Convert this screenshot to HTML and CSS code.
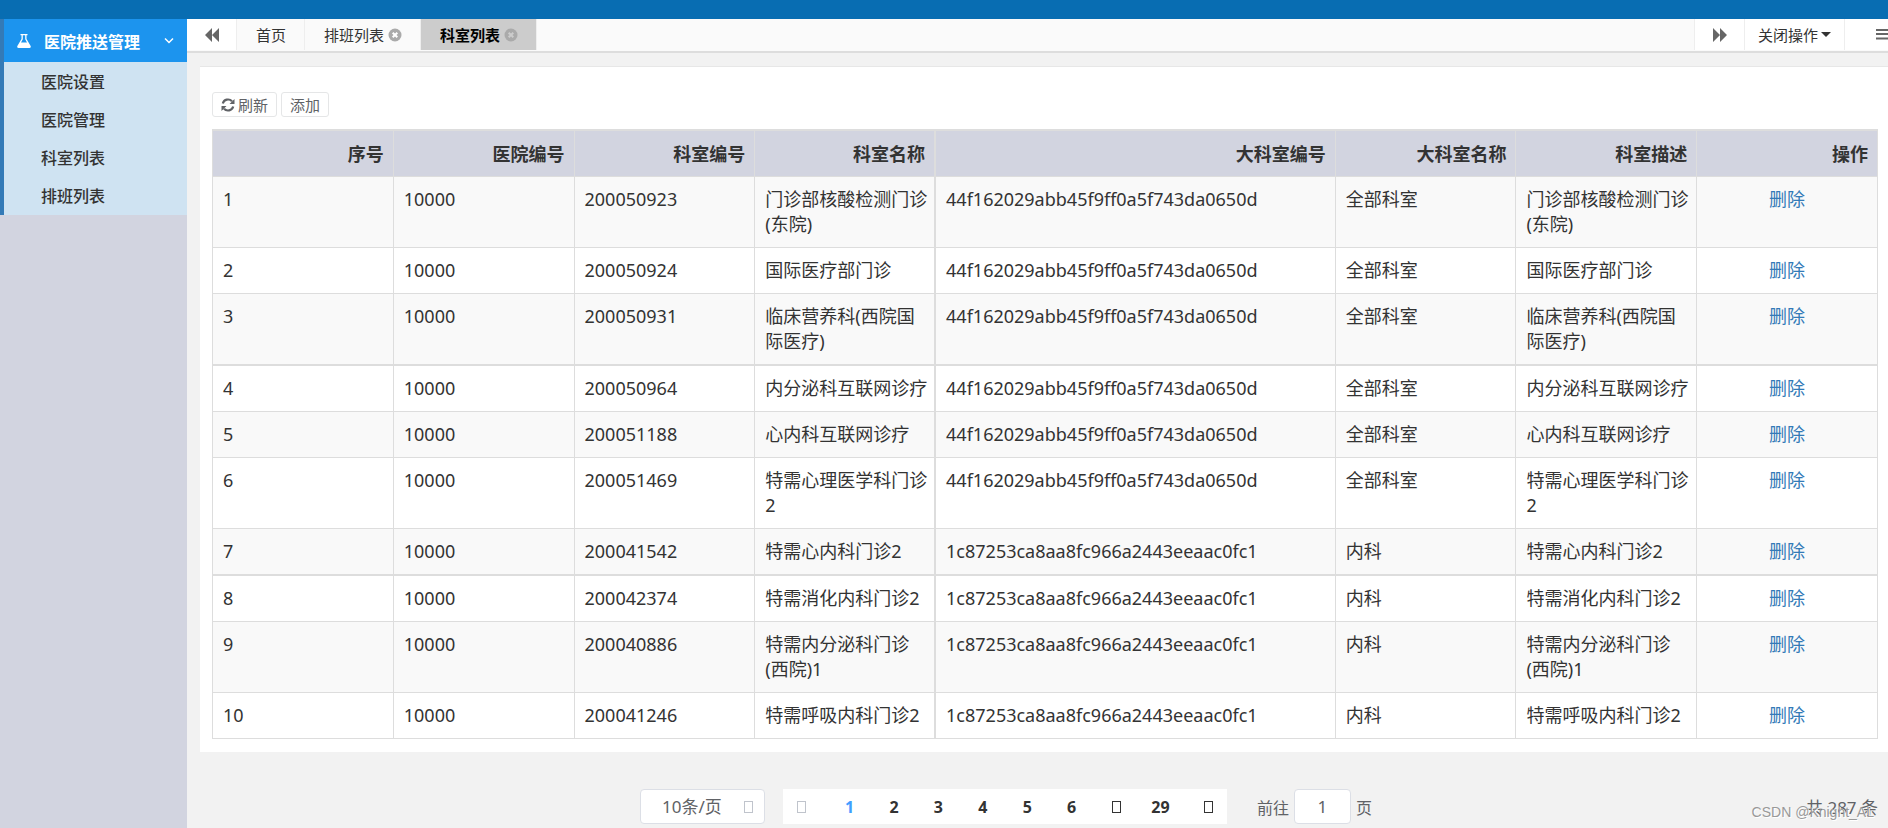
FILE: index.html
```html
<!DOCTYPE html>
<html lang="zh-CN">
<head>
<meta charset="utf-8">
<title>科室列表</title>
<link rel="stylesheet" href="styles.css">
</head>
<body>
<header class="topbar"></header>
<div class="shell">
  <nav class="sidebar">
    <div class="menu">
      <button class="menu-head" type="button">
        <svg class="flask" width="16" height="16" viewBox="0 0 16 16" aria-hidden="true"><path fill="currentColor" fill-rule="evenodd" d="M4.500 1h7v1.300H10.500V6l4 6.800c.7 1.200.3 2.200-1.100 2.200H2.600c-1.400 0-1.800-1-1.100-2.200L5.500 6V2.300h-1zM6.800 2.300v4L5 9.500h6L9.200 6.300v-4z"/></svg>
        <span>医院推送管理</span>
        <svg class="chev" width="12" height="8" viewBox="0 0 12 8" aria-hidden="true"><path d="M2 1.500l4 4 4-4" fill="none" stroke="currentColor" stroke-width="1.500"/></svg>
      </button>
      <a class="menu-item" href="#">医院设置</a>
      <a class="menu-item" href="#">医院管理</a>
      <a class="menu-item" href="#">科室列表</a>
      <a class="menu-item" href="#">排班列表</a>
    </div>
  </nav>
  <main class="main">
    <div class="tabs">
      <button class="tab-ctl" type="button" aria-label="向左"><svg width="16" height="14" viewBox="0 0 16 14"><path fill="currentColor" d="M8 0v14L1 7zM15 0v14L8 7z"/></svg></button>
      <a class="tab" href="#">首页</a>
      <a class="tab" href="#">排班列表<svg class="close" width="14" height="14" viewBox="0 0 14 14"><circle cx="7" cy="7" r="6.500" fill="currentColor"/><path d="M4.700 4.700l4.600 4.600M9.300 4.700L4.700 9.300" stroke="#fff" stroke-width="2"/></svg></a>
      <a class="tab tab-active" href="#">科室列表<svg class="close" width="14" height="14" viewBox="0 0 14 14"><circle cx="7" cy="7" r="6.500" fill="currentColor"/><path d="M4.700 4.700l4.600 4.600M9.300 4.700L4.700 9.300" stroke="#ccc" stroke-width="2"/></svg></a>
      <button class="tab-ctl tab-next" type="button" aria-label="向右"><svg width="16" height="14" viewBox="0 0 16 14"><path fill="currentColor" d="M1 0v14l7-7zM8 0v14l7-7z"/></svg></button>
      <button class="tab-ops" type="button">关闭操作<span class="caret"></span></button>
      <button class="tab-more" type="button" aria-label="菜单"><svg width="16" height="14" viewBox="0 0 16 14"><path fill="currentColor" d="M0 1h16v2H0zM0 5h16v2H0zM0 9.500h16v2H0z"/></svg></button>
    </div>
    <section class="panel">
      <div class="toolbar">
        <button class="btn" type="button"><svg width="14" height="14" viewBox="0 0 14 14"><path d="M1.800 5.500A5.400 5.400 0 0 1 11 3.300M12.200 8.500A5.400 5.400 0 0 1 3 10.700" fill="none" stroke="currentColor" stroke-width="2.200"/><path fill="currentColor" d="M13.500 1v5h-5zM.5 13V8h5z"/></svg>刷新</button>
        <button class="btn" type="button">添加</button>
      </div>
      <table class="grid">
        <colgroup><col><col><col><col><col class="wide"><col><col><col></colgroup>
        <thead><tr><th>序号</th><th>医院编号</th><th>科室编号</th><th>科室名称</th><th>大科室编号</th><th>大科室名称</th><th>科室描述</th><th>操作</th></tr></thead>
        <tbody>
          <tr><td>1</td><td>10000</td><td>200050923</td><td>门诊部核酸检测门诊(东院)</td><td>44f162029abb45f9ff0a5f743da0650d</td><td>全部科室</td><td>门诊部核酸检测门诊(东院)</td><td><a href="#">删除</a></td></tr>
          <tr><td>2</td><td>10000</td><td>200050924</td><td>国际医疗部门诊</td><td>44f162029abb45f9ff0a5f743da0650d</td><td>全部科室</td><td>国际医疗部门诊</td><td><a href="#">删除</a></td></tr>
          <tr><td>3</td><td>10000</td><td>200050931</td><td>临床营养科(西院国际医疗)</td><td>44f162029abb45f9ff0a5f743da0650d</td><td>全部科室</td><td>临床营养科(西院国际医疗)</td><td><a href="#">删除</a></td></tr>
          <tr><td>4</td><td>10000</td><td>200050964</td><td>内分泌科互联网诊疗</td><td>44f162029abb45f9ff0a5f743da0650d</td><td>全部科室</td><td>内分泌科互联网诊疗</td><td><a href="#">删除</a></td></tr>
          <tr><td>5</td><td>10000</td><td>200051188</td><td>心内科互联网诊疗</td><td>44f162029abb45f9ff0a5f743da0650d</td><td>全部科室</td><td>心内科互联网诊疗</td><td><a href="#">删除</a></td></tr>
          <tr><td>6</td><td>10000</td><td>200051469</td><td>特需心理医学科门诊2</td><td>44f162029abb45f9ff0a5f743da0650d</td><td>全部科室</td><td>特需心理医学科门诊2</td><td><a href="#">删除</a></td></tr>
          <tr><td>7</td><td>10000</td><td>200041542</td><td>特需心内科门诊2</td><td>1c87253ca8aa8fc966a2443eeaac0fc1</td><td>内科</td><td>特需心内科门诊2</td><td><a href="#">删除</a></td></tr>
          <tr><td>8</td><td>10000</td><td>200042374</td><td>特需消化内科门诊2</td><td>1c87253ca8aa8fc966a2443eeaac0fc1</td><td>内科</td><td>特需消化内科门诊2</td><td><a href="#">删除</a></td></tr>
          <tr><td>9</td><td>10000</td><td>200040886</td><td>特需内分泌科门诊(西院)1</td><td>1c87253ca8aa8fc966a2443eeaac0fc1</td><td>内科</td><td>特需内分泌科门诊(西院)1</td><td><a href="#">删除</a></td></tr>
          <tr><td>10</td><td>10000</td><td>200041246</td><td>特需呼吸内科门诊2</td><td>1c87253ca8aa8fc966a2443eeaac0fc1</td><td>内科</td><td>特需呼吸内科门诊2</td><td><a href="#">删除</a></td></tr>
        </tbody>
      </table>
    </section>
    <footer class="pagination">
      <div class="pager-group">
        <div class="size">
          <select aria-label="每页条数"><option>10条/页</option></select>
          <i class="box box-dim size-mark"></i>
        </div>
        <div class="pager">
          <button class="prev" type="button" aria-label="上一页"><i class="box box-dim"></i></button>
          <button class="current" type="button">1</button>
          <button type="button">2</button>
          <button type="button">3</button>
          <button type="button">4</button>
          <button type="button">5</button>
          <button type="button">6</button>
          <button type="button" aria-label="更多"><i class="box"></i></button>
          <button type="button">29</button>
          <button class="next" type="button" aria-label="下一页"><i class="box"></i></button>
        </div>
        <label class="jump">前往<input type="text" value="1">页</label>
      </div>
      <span class="total">共 287 条</span>
      <span class="watermark">CSDN @Knight_AL</span>
    </footer>
  </main>
</div>
</body>
</html>
```
FILE: styles.css
```css
* { box-sizing: border-box; }

body {
  margin: 0;
  display: flex;
  flex-direction: column;
  height: 100vh;
  overflow: hidden;
  background: #f2f2f2;
  color: #333;
  font-family: "Noto Sans", "Noto Sans CJK SC", sans-serif;
  font-size: 16px;
}

a { color: #337ab7; text-decoration: none; }

button, input, select {
  margin: 0;
  padding: 0;
  border: 0;
  background: none;
  color: inherit;
  font: inherit;
}

.topbar { flex: none; height: 19px; background: #086db2; }

.shell { display: flex; flex: 1; min-height: 0; }

/* Sidebar */
.sidebar { flex: none; width: 187px; background: #d2d4e0; }

.menu { border-left: 4px solid #337ab7; background: #cfe3f2; }

.menu-head {
  display: flex;
  align-items: center;
  width: 100%;
  height: 43px;
  margin-bottom: 1px;
  padding: 0 12px;
  background: #1c94ee;
  color: #fff;
  font-weight: bold;
}

.flask { margin-right: 12px; }
.chev { margin-left: auto; }

.menu-item {
  display: block;
  height: 38px;
  padding-left: 37px;
  line-height: 38px;
  color: #333;
  font-weight: 500;
}

/* Main column */
.main {
  display: flex;
  flex: 1;
  flex-direction: column;
  min-width: 0;
}

.tabs {
  display: flex;
  flex: none;
  height: 34px;
  padding-bottom: 1px;
  border-bottom: 2px solid #ddd;
  background: #fafafa;
  overflow: hidden;
  font-size: 15px;
  line-height: 30px;
}

.tab-ctl, .tab-ops, .tab-more {
  display: flex;
  flex: none;
  align-items: center;
  justify-content: center;
  background: #fff;
}

.tab-ctl { width: 50px; border-right: 1px solid #eee; color: #666; }
.tab-next { width: 51px; margin-left: auto; border-left: 1px solid #eee; }
.tab-ops { width: 100px; border-right: 1px solid #eee; }
.tab-more { width: 43px; padding-left: 31px; justify-content: flex-start; color: #666; }
.tab-more svg { flex: none; }

.caret {
  margin-left: 3px;
  border: 5px solid transparent;
  border-top-color: #333;
  border-bottom: 0;
}

.tab {
  display: flex;
  align-items: center;
  padding: 0 18px 0 19px;
  border-right: 1px solid #eee;
  color: #333;
}

.tab-active { background: #ccc; color: #000; font-weight: bold; }
.close { margin-left: 4px; color: #aaa; }

.panel {
  flex: none;
  margin: 13px 0 0 13px;
  padding: 25px 10px 13px 12px;
  border-top: 1px solid #e7e7e7;
  background: #fff;
}

.toolbar { display: flex; gap: 4px; margin-bottom: 12px; }

.btn {
  display: flex;
  align-items: center;
  gap: 3px;
  height: 25px;
  padding: 0 8px;
  border: 1px solid #e5e6e7;
  border-radius: 3px;
  color: #606266;
  font-size: 15px;
}

/* Table */
.grid {
  width: 100%;
  table-layout: fixed;
  border-collapse: separate;
  border-spacing: 0;
  border-top: 2px solid #ddd;
  border-left: 1px solid #ddd;
  font-size: 18px;
  line-height: 25px;
}

.wide { width: 24%; }

.grid th, .grid td {
  padding: 10px 6px 10px 10px;
  border-right: 1px solid #ddd;
  border-bottom: 1px solid #ddd;
  text-align: left;
  vertical-align: top;
}

.grid th { padding: 11px 9px 9px 10px; background: #d2d4e0; text-align: right; }
.grid tbody tr:nth-child(odd) { background: #f9f9f9; }
.grid tbody tr:nth-child(4n+3) td { border-bottom-width: 2px; }
.grid th:nth-child(4), .grid td:nth-child(4) { border-right-width: 2px; }
.grid td:last-child { padding-right: 10px; text-align: center; }

/* Pagination */
.pagination {
  position: relative;
  display: flex;
  flex: none;
  align-items: center;
  padding: 37px 10px 0 19px;
  color: #606266;
}

.pager-group {
  display: flex;
  flex: 1;
  align-items: center;
  justify-content: center;
}

.size { position: relative; width: 125px; margin-right: 18px; }

.size select {
  width: 100%;
  height: 35px;
  padding: 0 21px;
  border: 1px solid #dcdfe6;
  border-radius: 4px;
  background: #fff;
  font-size: 17px;
  appearance: none;
}

.box {
  display: block;
  width: 9px;
  height: 12px;
  border: 1px solid #333;
}

.box-dim { border-color: #c0c4cc; }
.size-mark { position: absolute; top: 12px; right: 12px; }

.pager { display: flex; width: 444px; height: 35px; background: #fff; color: #333; }

.pager button {
  display: flex;
  flex: 1 1 0;
  align-items: center;
  justify-content: center;
  font-weight: bold;
}

.pager .current { color: #409eff; }
.pager .prev i { margin-right: 7px; }
.pager .next i { margin-left: 7px; }

.jump { display: flex; align-items: center; gap: 5px; margin-left: 30px; }

.jump input {
  width: 57px;
  height: 35px;
  border: 1px solid #dcdfe6;
  border-radius: 4px;
  background: #fff;
  font-size: 17px;
  text-align: center;
}

.total { font-size: 17px; }

.watermark {
  position: absolute;
  right: 14px;
  bottom: 4px;
  color: #999;
  font: 14px "Liberation Sans", sans-serif;
  text-shadow: 1px 1px 0 #fff;
}
```
